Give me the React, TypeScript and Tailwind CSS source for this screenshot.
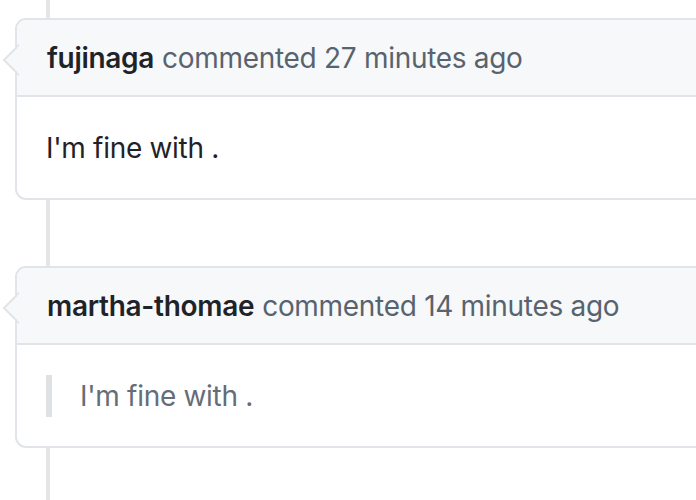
import React from "react";

type Comment = {
  author: string;
  when: string;
  body: string;
  quote?: boolean;
};

const comments: Comment[] = [
  { author: "fujinaga", when: "27 minutes ago", body: "I'm fine with ." },
  { author: "martha-thomae", when: "14 minutes ago", body: "I'm fine with .", quote: true },
];

function Arrow() {
  return (
    <svg
      className="absolute left-[-15px] top-[24px]"
      width="17"
      height="32"
      viewBox="0 0 17 32"
    >
      <polygon points="17,1 2,16 17,31" fill="#f6f8fa" stroke="#e1e4e8" strokeWidth="2" />
      <rect x="15.5" y="2.5" width="3" height="27" fill="#f6f8fa" />
    </svg>
  );
}

function CommentCard({ comment }: { comment: Comment }) {
  return (
    <div className="relative w-[720px] rounded-[11px] border-2 border-[#e1e4e8] bg-white">
      <Arrow />
      <div className="flex h-[77px] items-center rounded-t-[9px] border-b-2 border-[#e1e4e8] bg-[#f6f8fa] pl-[30px] text-[28px] leading-[42px] tracking-[-0.3px]">
        <span className="font-semibold text-[#1f2328]">{comment.author}</span>
        <span className="ml-[8px] text-[#59636e]">commented {comment.when}</span>
      </div>
      <div className="flex h-[101px] items-center pl-[29px] text-[28px] leading-[42px] tracking-[-0.3px]">
        {comment.quote ? (
          <div className="border-l-[6px] border-[#dfe2e5] pl-[28px] text-[#656d76]">{comment.body}</div>
        ) : (
          <p className="text-[#1f2328]">{comment.body}</p>
        )}
      </div>
    </div>
  );
}

export default function App() {
  return (
    <div className="relative h-[500px] w-[696px] overflow-hidden bg-white font-['Inter',sans-serif]">
      <div className="absolute bottom-0 left-[46px] top-0 w-[4px] bg-[#e4e5e9]" />
      <div className="relative flex flex-col gap-[66px] pl-[15px] pt-[18px]">
        {comments.map((c) => (
          <CommentCard key={c.author} comment={c} />
        ))}
      </div>
    </div>
  );
}
